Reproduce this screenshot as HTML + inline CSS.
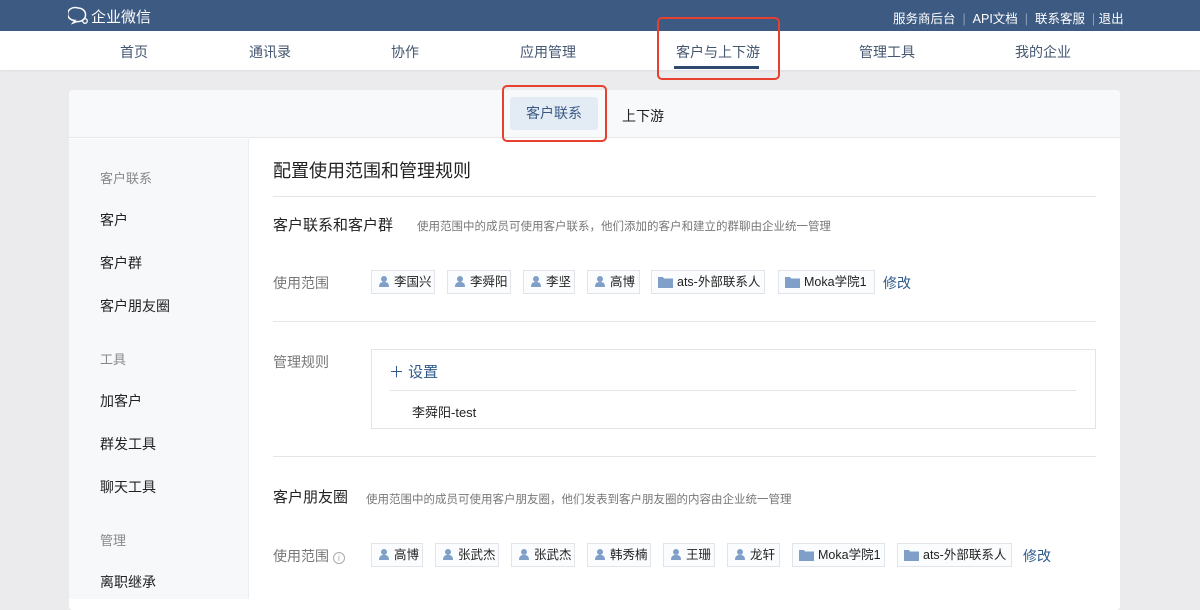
<!DOCTYPE html>
<html><head><meta charset="utf-8"><style>
*{margin:0;padding:0;box-sizing:border-box}
body{width:1200px;height:590px;overflow:hidden;background:#ebebee;font-family:"Liberation Sans","Noto Sans CJK SC",sans-serif;position:relative;color:#222}
.a{position:absolute;white-space:nowrap}
.top{left:0;top:0;width:1200px;height:31px;background:#3c5a82}
.nav{left:0;top:31px;width:1200px;height:39px;background:#fff;box-shadow:0 1px 2px rgba(0,0,0,.06)}
.nv{top:42px;font-size:14px;color:#445670}
.card{left:69px;top:90px;width:1051px;height:520px;background:#fff;border-radius:4px}
.tabbar{left:69px;top:90px;width:1051px;height:48px;background:#f8f9fb;border-bottom:1px solid #e6e8eb;border-radius:4px 4px 0 0}
.side{left:69px;top:139px;width:180px;height:460px;background:#f7f8fa;border-right:1px solid #eceef0}
.sh{font-size:13px;color:#888}
.si{font-size:14px;color:#222}
.lbl{font-size:14px;color:#777}
.tag{height:24px;border:1px solid #e1e4e8;background:#fbfcfd;font-size:12.5px;color:#222;line-height:22px;padding-left:6px}
.tag svg{vertical-align:-2px;margin-right:4px}
.link{font-size:14px;color:#2f5a8a}
.hr{height:1px;background:#e3e5e8}
.red{border:2px solid #e8402f;border-radius:5px}
</style></head><body>
<div class="a top"></div>
<svg class="a" style="left:68px;top:6px" width="22" height="20" viewBox="0 0 22 20"><path d="M10 2a7.5 6.5 0 1 0 -3 12.5l-2 2.5 4-1.5a7.5 6.5 0 0 0 8.5-6.5A7.5 6.5 0 0 0 10 2z" fill="none" stroke="#fff" stroke-width="1.5"/><circle cx="17" cy="15" r="2.3" fill="none" stroke="#fff" stroke-width="1.3"/></svg>
<div class="a" style="left:91px;top:6px;color:#fff;font-size:15px">企业微信</div>
<div class="a" style="left:893px;top:8px;color:#fff;font-size:12.5px">服务商后台 <span style="color:#8c9fbb">&nbsp;|&nbsp;</span> API文档 <span style="color:#8c9fbb">&nbsp;|&nbsp;</span> 联系客服 <span style="color:#8c9fbb">&nbsp;|&nbsp;</span>退出</div>
<div class="a nav"></div>
<div class="a nv" style="left:120px">首页</div>
<div class="a nv" style="left:249px">通讯录</div>
<div class="a nv" style="left:391px">协作</div>
<div class="a nv" style="left:520px">应用管理</div>
<div class="a nv" style="left:676px">客户与上下游</div>
<div class="a" style="left:674px;top:66px;width:85px;height:3px;background:#2f4a6e"></div>
<div class="a nv" style="left:859px">管理工具</div>
<div class="a nv" style="left:1015px">我的企业</div>
<div class="a red" style="left:657px;top:17px;width:123px;height:63px"></div>
<div class="a card"></div>
<div class="a tabbar"></div>
<div class="a" style="left:510px;top:97px;width:88px;height:33px;background:#e3ebf5;border-radius:3px;color:#3a5a84;font-size:14px;text-align:center;line-height:33px">客户联系</div>
<div class="a" style="left:622px;top:106px;font-size:14px">上下游</div>
<div class="a red" style="left:502px;top:85px;width:105px;height:57px"></div>
<div class="a side"></div>
<div class="a sh" style="left:100px;top:168px">客户联系</div>
<div class="a si" style="left:100px;top:210px">客户</div>
<div class="a si" style="left:100px;top:253px">客户群</div>
<div class="a si" style="left:100px;top:296px">客户朋友圈</div>
<div class="a sh" style="left:100px;top:349px">工具</div>
<div class="a si" style="left:100px;top:391px">加客户</div>
<div class="a si" style="left:100px;top:434px">群发工具</div>
<div class="a si" style="left:100px;top:477px">聊天工具</div>
<div class="a sh" style="left:100px;top:530px">管理</div>
<div class="a si" style="left:100px;top:572px">离职继承</div>
<div class="a" style="left:273px;top:157px;font-size:18px">配置使用范围和管理规则</div>
<div class="a hr" style="left:273px;top:196px;width:823px"></div>
<div class="a" style="left:273px;top:214px;font-size:15px">客户联系和客户群</div>
<div class="a" style="left:417px;top:218px;font-size:11.5px;color:#777">使用范围中的成员可使用客户联系，他们添加的客户和建立的群聊由企业统一管理</div>
<div class="a lbl" style="left:273px;top:273px">使用范围</div>
<div class="a hr" style="left:273px;top:321px;width:823px"></div>
<div class="a lbl" style="left:273px;top:352px">管理规则</div>
<div class="a" style="left:371px;top:349px;width:725px;height:80px;border:1px solid #e1e4e8"></div>
<div class="a link" style="left:389px;top:361px;font-size:15px">＋ 设置</div>
<div class="a hr" style="left:390px;top:390px;width:686px"></div>
<div class="a" style="left:412px;top:402px;font-size:13px">李舜阳-test</div>
<div class="a hr" style="left:273px;top:456px;width:823px"></div>
<div class="a" style="left:273px;top:486px;font-size:15px">客户朋友圈</div>
<div class="a" style="left:366px;top:491px;font-size:11.5px;color:#777">使用范围中的成员可使用客户朋友圈，他们发表到客户朋友圈的内容由企业统一管理</div>
<div class="a lbl" style="left:273px;top:546px">使用范围 <span style="display:inline-block;width:12px;height:12px;border:1px solid #aaa;border-radius:50%;font-size:9px;line-height:10px;text-align:center;color:#aaa">i</span></div>
<script>
var P='<svg width="12" height="13" viewBox="0 0 12 13"><circle cx="6" cy="4" r="3" fill="#7f9fc8"/><path d="M1 12c0-4 2-5 5-5s5 1 5 5z" fill="#7f9fc8"/></svg>';
var F='<svg width="15" height="12" viewBox="0 0 15 12"><path d="M0 1h5l1 1.5h9V12H0z" fill="#7f9fc8"/></svg>';
function row(y,items,mx){var h='';items.forEach(function(t){h+='<div class="a tag" style="left:'+t[0]+'px;top:'+y+'px;width:'+(t[1]-t[0])+'px">'+(t[3]?F:P)+t[2]+'</div>'});h+='<div class="a link" style="left:'+mx+'px;top:'+(y+3)+'px">修改</div>';document.write(h)}
row(270,[[371,435,'李国兴'],[447,511,'李舜阳'],[523,575,'李坚'],[587,640,'高博'],[651,765,'ats-外部联系人',1],[778,875,'Moka学院1',1]],883);
row(543,[[371,423,'高博'],[435,499,'张武杰'],[511,575,'张武杰'],[587,651,'韩秀楠'],[663,715,'王珊'],[727,780,'龙轩'],[792,885,'Moka学院1',1],[897,1012,'ats-外部联系人',1]],1023);
</script>
</body></html>
